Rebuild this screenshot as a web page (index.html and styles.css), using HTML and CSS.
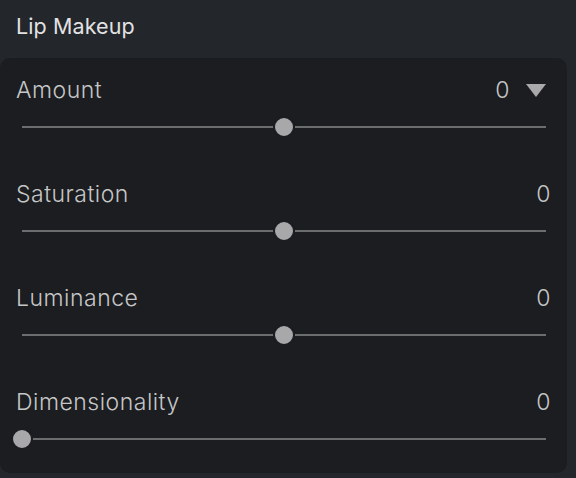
FILE: index.html
```html
<!DOCTYPE html>
<html>
<head>
<meta charset="utf-8">
<link rel="stylesheet" href="styles.css">
</head>
<body>
<div class="panel">
  <div class="title">Lip Makeup</div>
  <div class="card">
    <div class="row">
      <div class="head">
        <span class="label">Amount</span>
        <span class="value">0<svg class="caret" width="20" height="13" viewBox="0 0 20 13"><path d="M0 0H20L10 13Z" fill="#a9a9ab"/></svg></span>
      </div>
      <div class="slider"><div class="track"></div><div class="thumb" style="left:50%"></div></div>
    </div>
    <div class="row">
      <div class="head">
        <span class="label">Saturation</span>
        <span class="value">0</span>
      </div>
      <div class="slider"><div class="track"></div><div class="thumb" style="left:50%"></div></div>
    </div>
    <div class="row">
      <div class="head">
        <span class="label">Luminance</span>
        <span class="value">0</span>
      </div>
      <div class="slider"><div class="track"></div><div class="thumb" style="left:50%"></div></div>
    </div>
    <div class="row">
      <div class="head">
        <span class="label">Dimensionality</span>
        <span class="value">0</span>
      </div>
      <div class="slider"><div class="track"></div><div class="thumb" style="left:0%"></div></div>
    </div>
  </div>
</div>
</body>
</html>
```
FILE: styles.css
```css
html, body {
  margin: 0;
  padding: 0;
  background: #23262b;
}
body {
  width: 576px;
  height: 478px;
  overflow: hidden;
  font-family: Inter, "Noto Sans", sans-serif;
}
.panel {
  display: flex;
  flex-direction: column;
}
.title {
  color: #e2e2e3;
  font-size: 21.5px;
  font-weight: 370;
  letter-spacing: 0.1px;
  line-height: 24px;
  padding: 14px 16px 0;
  height: 44px;
}
.card {
  background: #1b1d20;
  border-radius: 10px;
  margin-right: 9px;
  padding: 20px 16px 24px;
  display: flex;
  flex-direction: column;
  gap: 45px;
}
.row {
  display: flex;
  flex-direction: column;
}
.head {
  display: flex;
  justify-content: space-between;
  align-items: center;
  height: 24px;
  font-size: 23px;
  letter-spacing: 0.5px;
  line-height: 24px;
  color: #c6c6c7;
  font-weight: 350;
}
.value {
  display: flex;
  align-items: center;
  gap: 16px;
}
.caret {
  display: block;
  margin-right: 5px;
}
.slider {
  position: relative;
  height: 20px;
  margin: 15px 5px 0 6px;
}
.track {
  position: absolute;
  left: 0;
  right: 0;
  top: 9px;
  height: 2px;
  background: #6c6d6f;
}
.thumb {
  position: absolute;
  top: -1px;
  width: 18px;
  height: 18px;
  border-radius: 50%;
  background: #a8a8aa;
  border: 2px solid #1b1d20;
  transform: translateX(-50%);
}
```
